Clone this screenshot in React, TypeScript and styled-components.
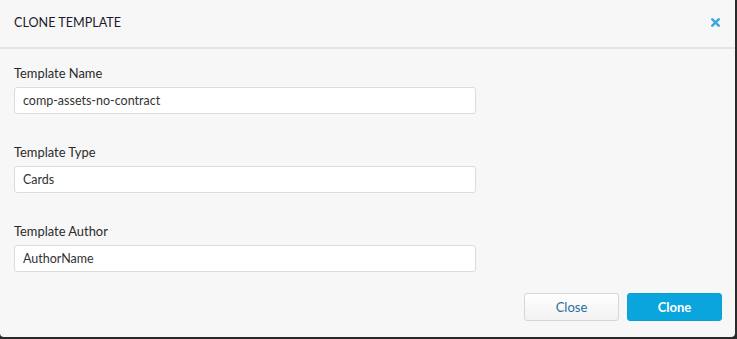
import React from "react";
import styled, { createGlobalStyle } from "styled-components";

const Global = createGlobalStyle`
  html, body { margin: 0; padding: 0; background: #2a2a2a; }
  body { font-family: Lato, "Open Sans", sans-serif; }
  * { box-sizing: border-box; }
`;

const Modal = styled.div`
  width: 735px;
  height: 337px;
  background: #f7f7f7;
  border-radius: 0 0 4px 4px;
  display: flex;
  flex-direction: column;
`;

const Header = styled.div`
  height: 49px;
  border-bottom: 2px solid #e4e4e4;
  display: flex;
  align-items: center;
  justify-content: space-between;
  padding: 0 15px 3px 14px;
`;

const Title = styled.h2`
  margin: 0;
  font-size: 12.6px;
  font-weight: 400;
  color: #1b1b2b;
`;

const CloseIcon = styled.button`
  border: 0;
  background: none;
  padding: 0;
  width: 9px;
  height: 9px;
  display: flex;
  cursor: pointer;
`;

const Body = styled.div`
  display: flex;
  flex-direction: column;
  gap: 31px;
  padding: 17px 14px 0 14px;
`;

const Field = styled.div`
  display: flex;
  flex-direction: column;
  gap: 7px;
`;

const Label = styled.label`
  font-size: 12.9px;
  color: #2b2b2b;
  line-height: 14px;
`;

const Input = styled.input`
  width: 462px;
  height: 27px;
  border: 1px solid #dcdcdc;
  border-radius: 3px;
  background: #fff;
  padding: 0 8px;
  font-family: Lato, "Open Sans", sans-serif;
  font-size: 12.5px;
  color: #333;
  outline: none;
`;

const Footer = styled.div`
  display: flex;
  justify-content: flex-end;
  gap: 8px;
  padding: 21px 13px 0 0;
`;

const Button = styled.button<{ $primary?: boolean }>`
  width: 95px;
  height: 28px;
  border-radius: 3px;
  font-family: Lato, "Open Sans", sans-serif;
  font-size: 13px;
  cursor: pointer;
  border: 1px solid ${(p) => (p.$primary ? "#0a9fd6" : "#d6d6d6")};
  background: ${(p) =>
    p.$primary ? "#0ba5dd" : "linear-gradient(#ffffff, #f2f2f2)"};
  color: ${(p) => (p.$primary ? "#ffffff" : "#2b6f9a")};
  font-weight: ${(p) => (p.$primary ? 700 : 400)};
`;

export default function App() {
  return (
    <>
      <Global />
      <Modal>
        <Header>
          <Title>CLONE TEMPLATE</Title>
          <CloseIcon aria-label="close">
            <svg width="9" height="9" viewBox="0 0 9 9">
              <path
                d="M1.3 1.3 L7.7 7.7 M7.7 1.3 L1.3 7.7"
                stroke="#3aa8df"
                strokeWidth="2.4"
                strokeLinecap="square"
              />
            </svg>
          </CloseIcon>
        </Header>
        <Body>
          <Field>
            <Label>Template Name</Label>
            <Input defaultValue="comp-assets-no-contract" />
          </Field>
          <Field>
            <Label>Template Type</Label>
            <Input defaultValue="Cards" />
          </Field>
          <Field>
            <Label>Template Author</Label>
            <Input defaultValue="AuthorName" />
          </Field>
        </Body>
        <Footer>
          <Button>Close</Button>
          <Button $primary>Clone</Button>
        </Footer>
      </Modal>
    </>
  );
}
